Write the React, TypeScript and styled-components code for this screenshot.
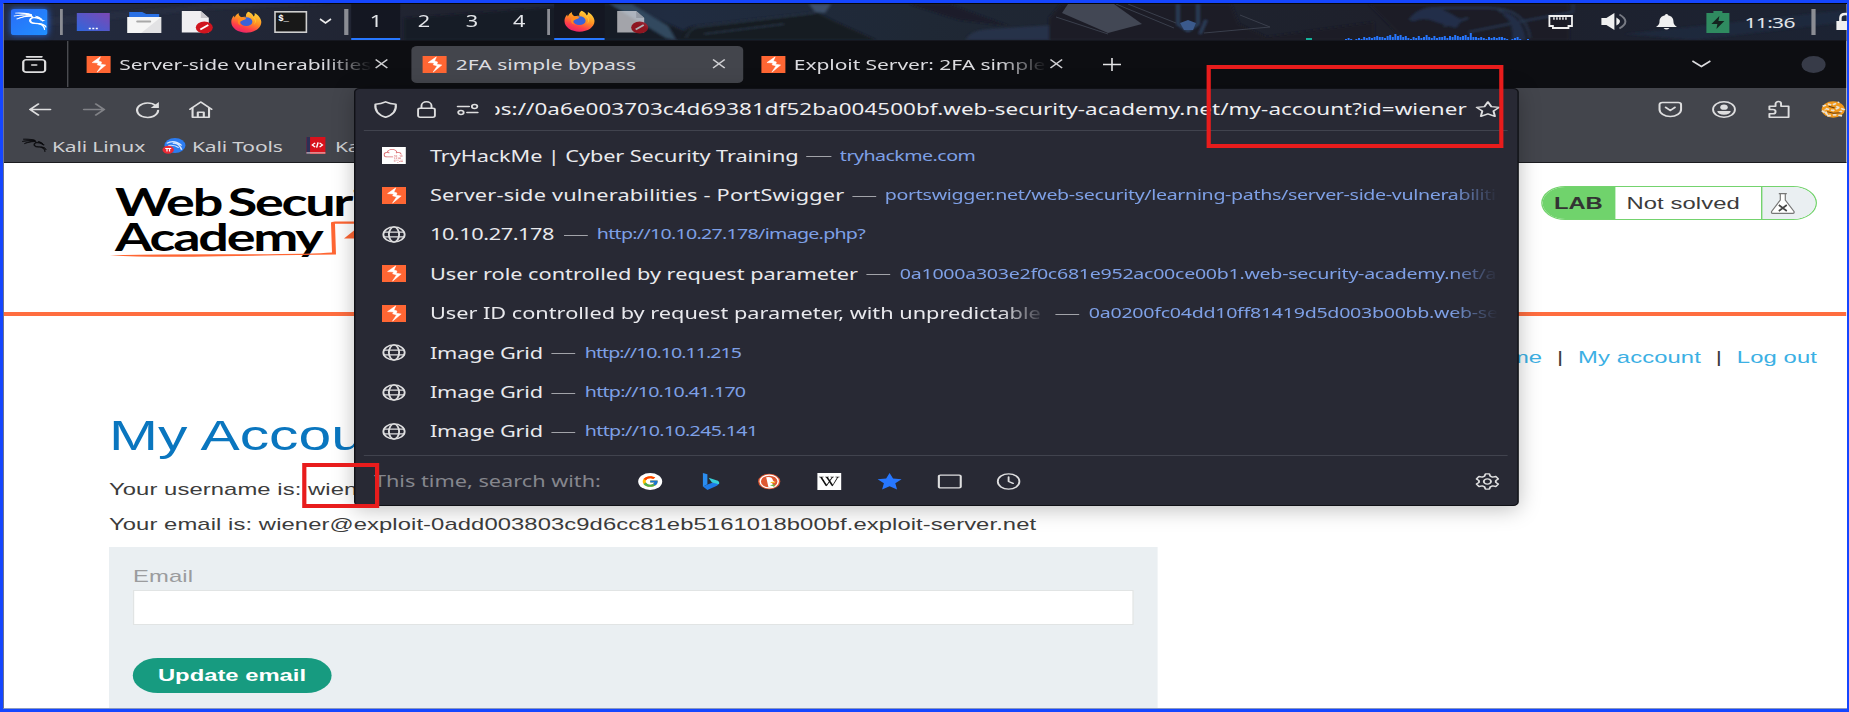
import React from "react";
import styled, { createGlobalStyle, css } from "styled-components";
import { SiKalilinux, SiTryhackme, SiWikipedia } from "react-icons/si";
import { FcGoogle } from "react-icons/fc";

/* The desktop is displayed on a wide, non-square-pixel screen. */
const STRETCH = 1.4;
const sx = (n: number) => `${n / STRETCH}px`;

const UI = `"Noto Sans", "Open Sans", sans-serif`;
const WEB = `"Liberation Sans", Arial, sans-serif`;

const GlobalStyle = createGlobalStyle`
  * { box-sizing: border-box; }
  body { margin: 0; background: #1546ff; overflow: hidden; }
`;

const Frame = styled.div`
  width: 1849px;
  height: 712px;
  padding: 3px 2px 3px 3px;
  background: #1546ff;
`;

const Screen = styled.div`
  height: 706px;
  overflow: hidden;
  background: #fff;
  border-top: 1px solid #05060c;
  border-left: 1px solid #6c7390;
  border-bottom: 1px solid #8b9ac0;
`;

const Stage = styled.div`
  position: relative;
  display: flex;
  flex-direction: column;
  width: ${sx(1843)};
  height: 704px;
  transform: scaleX(${STRETCH});
  transform-origin: 0 0;
  font-family: ${UI};
`;

const Item = styled.div<{ $gap?: number; $w?: number }>`
  display: flex;
  flex: none;
  align-items: center;
  margin-left: ${(p) => sx(p.$gap ?? 0)};
  ${(p) => p.$w !== undefined && css`width: ${sx(p.$w)};`}
  white-space: nowrap;
`;

const Glyph = styled.svg.attrs({ preserveAspectRatio: "none" })<{ $w?: number; $h?: number }>`
  display: block;
  flex: none;
  width: ${(p) => sx(p.$w ?? 24)};
  height: ${(p) => p.$h ?? 17}px;
  overflow: visible;
`;

/* ---------- taskbar ---------- */

const Taskbar = styled.div`
  position: relative;
  display: flex;
  align-items: center;
  height: 37px;
  padding-bottom: 1px;
  background: #1e212d;
  border-bottom: 1px solid #15171f;
  flex: none;
`;

const Wallpaper = styled.svg`
  position: absolute;
  inset: 0;
  width: 100%;
  height: 36px;
`;

const Divider = styled.div<{ $gap: number }>`
  position: relative;
  flex: none;
  width: ${sx(3.5)};
  height: 26px;
  margin-left: ${(p) => sx(p.$gap)};
  background: #8b8d94;
`;

const Launcher = styled(Item)`
  position: relative;
  justify-content: center;
  height: 36px;
`;

const KaliTile = styled.div`
  display: flex;
  align-items: center;
  justify-content: center;
  width: ${sx(36)};
  height: 26px;
  border-radius: 2px;
  background: linear-gradient(135deg, #2a6cf8, #1f90ff);
  box-shadow: 0 0 5px #2468e8;
  color: #fff;
`;

const Dragon = styled(SiKalilinux)`
  flex: none;
  stroke: currentColor;
  stroke-width: 0.8px;
  overflow: visible;
`;

const Workspace = styled.div<{ $active?: boolean; $w: number; $gap?: number }>`
  position: relative;
  display: flex;
  flex: none;
  align-items: center;
  justify-content: center;
  width: ${(p) => sx(p.$w)};
  height: 37px;
  margin-left: ${(p) => sx(p.$gap ?? 0)};
  border-bottom: 2px solid ${(p) => (p.$active ? "#2777ff" : "transparent")};
  background: ${(p) => (p.$active ? "#141722" : "transparent")};
  color: #e4e6ea;
  font-size: 15.5px;
`;

const Clock = styled(Item)`
  position: relative;
  color: #e2e5ea;
  font-size: 15px;
  letter-spacing: -0.5px;
`;

/* ---------- tab strip ---------- */

const TabStrip = styled.div`
  display: flex;
  align-items: center;
  height: 47px;
  padding-bottom: 1px;
  background: #0d0e12;
  flex: none;
`;

const TabRule = styled.div`
  width: 1px;
  height: 46px;
  margin-left: ${sx(21)};
  background: #4a4b50;
`;

const Tab = styled.div<{ $active?: boolean; $gap: number; $w: number }>`
  display: flex;
  flex: none;
  align-items: center;
  width: ${(p) => sx(p.$w)};
  height: 37px;
  margin-left: ${(p) => sx(p.$gap)};
  padding: 0 ${sx(18)} 0 ${sx(12)};
  border-radius: 4px;
  background: ${(p) => (p.$active ? "#43454c" : "transparent")};
`;

const fade = css`
  mask-image: linear-gradient(to right, #000 calc(100% - 34px), transparent);
`;

const TabTitle = styled.span<{ $fade?: boolean }>`
  flex: 1;
  overflow: hidden;
  margin: 0 ${sx(3)} 0 ${sx(9)};
  color: #dcdce0;
  font-size: 15px;
  line-height: 22px;
  white-space: nowrap;
  letter-spacing: ${(p) => (p.$fade ? -0.05 : 0)}px;
  ${(p) => p.$fade && fade}
`;

/* ---------- toolbars ---------- */

const NavBar = styled.div`
  display: flex;
  align-items: center;
  height: 44px;
  padding-bottom: 2px;
  background: #43454c;
  flex: none;
`;

const Bookmarks = styled.div`
  display: flex;
  align-items: center;
  height: 31px;
  padding-bottom: 3px;
  background: #43454c;
  border-bottom: 1px solid #1b1c20;
  flex: none;
`;

const BookmarkLabel = styled(Item)`
  color: #cfd0d3;
  font-size: 15px;
  line-height: 22px;
  letter-spacing: -0.1px;
`;

const Spacer = styled.div`
  flex: 1;
`;

/* ---------- web page ---------- */

const Page = styled.div`
  flex: 1;
  overflow: hidden;
  background: #fff;
  color: #3c3c3c;
  font-family: ${WEB};
`;

const PageHeader = styled.header`
  display: flex;
  justify-content: space-between;
  height: 153px;
  padding: 23px ${sx(30)} 0 ${sx(105)};
  border-bottom: 4px solid #ff6d3f;
`;

const Brand = styled.div`
  position: relative;
  width: ${sx(320)};
  margin-top: -2px;
  padding-left: ${sx(6)};
  color: #000;
  font-family: Lato, sans-serif;
  font-size: 38.5px;
  font-weight: 700;
  line-height: 34.5px;
  letter-spacing: -1.6px;
  word-spacing: -3px;
  white-space: nowrap;
`;

const BrandLine = styled.svg`
  position: absolute;
  left: 0;
  top: 30px;
  width: ${sx(300)};
  height: 48px;
`;

const LabStatus = styled.div`
  display: flex;
  width: ${sx(276)};
  height: 34px;
  border: 1px solid #74d36e;
  border-radius: ${sx(24)} / 17px;
  overflow: hidden;
`;

const LabTag = styled.div`
  width: ${sx(73)};
  padding-left: ${sx(11.5)};
  background: #70d36c;
  color: #333;
  font-size: 17px;
  font-weight: bold;
  line-height: 34px;
`;

const LabText = styled.div`
  flex: 1;
  padding-left: ${sx(11)};
  font-size: 17px;
  line-height: 33px;
  letter-spacing: 0.07px;
`;

const LabFlask = styled.div`
  display: flex;
  align-items: center;
  width: ${sx(55)};
  padding-left: ${sx(9)};
  border-left: 1px solid #74d36e;
  background: #eaeff2;
`;

const AccountLinks = styled.nav`
  display: flex;
  justify-content: flex-end;
  gap: ${sx(14.8)};
  padding: 32px ${sx(30)} 0 0;
  font-size: 17px;
  line-height: 20px;
  letter-spacing: 0.08px;
`;

const Link = styled.a`
  color: #3cb0e4;
`;

const Title = styled.h1`
  margin: 44px 0 0 ${sx(105)};
  color: #0a76bf;
  font-size: 42px;
  font-weight: 400;
  line-height: 48px;
`;

const Line = styled.p<{ $top: number }>`
  margin: ${(p) => p.$top}px 0 0 ${sx(105)};
  font-size: 17px;
  line-height: 20px;
  letter-spacing: 0.06px;
  white-space: nowrap;
`;

const Form = styled.form`
  width: ${sx(1049)};
  height: 170px;
  margin: 12px 0 0 ${sx(105)};
  padding: 20px ${sx(24)};
  background: #eaeff2;
`;

const Label = styled.label`
  display: block;
  color: #9b9c9e;
  font-size: 17px;
  line-height: 20px;
  letter-spacing: 0.1px;
`;

const Input = styled.input`
  display: block;
  width: 100%;
  height: 35px;
  margin-top: 3px;
  border: 1px solid #e1e4e4;
  background: #fff;
  outline: none;
`;

const Submit = styled.button`
  display: block;
  width: ${sx(198)};
  height: 35px;
  margin-top: 33px;
  padding: 0;
  border: 0;
  border-radius: ${sx(25)} / 17.5px;
  background: #179b80;
  color: #fff;
  font: bold 17px/35px ${WEB};
`;

/* ---------- address bar dropdown ---------- */

const Popup = styled.div`
  position: absolute;
  left: ${sx(349.5)};
  top: 84px;
  display: flex;
  flex-direction: column;
  width: ${sx(1165)};
  height: 418px;
  padding: 0 ${sx(9)};
  border: 1px solid #101116;
  border-radius: 4px;
  background: #282934;
  box-shadow: 0 3px 18px rgba(0, 0, 0, 0.26);
`;

const UrlRow = styled.div`
  display: flex;
  align-items: center;
  height: 42px;
  padding-bottom: 1px;
  border-bottom: 1px solid #41434e;
  flex: none;
`;

const UrlBox = styled(Item)`
  justify-content: flex-end;
  overflow: hidden;
  color: #eeeef1;
  font-size: 16px;
  line-height: 24px;
  letter-spacing: 0.05px;
`;

const Results = styled.div`
  display: flex;
  flex-direction: column;
  padding-top: 5px;
  height: 324px;
  flex: none;
`;

const Result = styled.div`
  display: flex;
  align-items: center;
  height: 39.4px;
  padding: 0 ${sx(10)} 0 ${sx(17.5)};
  white-space: nowrap;
`;

const ResultTitle = styled.span<{ $w: number; $track?: number; $fade?: boolean }>`
  flex: none;
  overflow: ${(p) => (p.$fade ? "hidden" : "visible")};
  width: ${(p) => sx(p.$w)};
  margin-left: ${sx(24.5)};
  color: #e9e9ed;
  font-size: 15.5px;
  line-height: 24px;
  letter-spacing: ${(p) => p.$track ?? 0}px;
  ${(p) => p.$fade && fade}
`;

const Dash = styled.span`
  flex: none;
  width: ${sx(24)};
  height: 1px;
  margin: 2px ${sx(9)} 0;
  background: #a2a3a9;
`;

const ResultUrl = styled.span<{ $track: number; $fade?: boolean }>`
  flex: 1;
  min-width: 0;
  overflow: hidden;
  color: #7ea0e6;
  font-size: 14px;
  line-height: 22px;
  letter-spacing: ${(p) => p.$track}px;
  ${(p) => p.$fade && fade}
`;

const Engines = styled.div`
  display: flex;
  flex: 1;
  align-items: center;
  padding-top: 1px;
  border-top: 1px solid #41434e;
`;

const EnginesLabel = styled(Item)`
  color: #85868d;
  font-size: 15.5px;
`;

const Wiki = styled.div`
  display: flex;
  align-items: center;
  justify-content: center;
  width: ${sx(24)};
  height: 17px;
  background: #fff;
  color: #111;
`;

const Highlight = styled.div<{ $x: number; $y: number; $w: number; $h: number }>`
  position: absolute;
  left: ${(p) => sx(p.$x)};
  top: ${(p) => p.$y}px;
  width: ${(p) => sx(p.$w)};
  height: ${(p) => p.$h}px;
  border: solid #e81c1c;
  border-width: 4.5px ${sx(4.5)};
`;

/* ---------- drawings ---------- */

const stroke = { fill: "none", stroke: "#dededf", strokeWidth: 1.25, strokeLinecap: "round", strokeLinejoin: "round" } as const;

const Bolt = () => (
  <Glyph viewBox="0 0 16 16">
    <rect width="16" height="16" fill="#ff6633" />
    <path d="M9.200.8 3.700 6.200 7.700 6.500 7.100 8.300 9.700 9.300 7 15.200 12.800 8.500 9.500 7.700 10 5.700 8 4.600z" fill="#fff" stroke="#fff" strokeWidth=".4" />
  </Glyph>
);

const Globe = () => (
  <Glyph viewBox="0 0 16 16">
    <g {...stroke}>
      <circle cx="8" cy="8" r="7.1" />
      <ellipse cx="8" cy="8" rx="3.4" ry="7.1" />
      <path d="M1.4 5.7h13.2M1.4 10.3h13.2" />
    </g>
  </Glyph>
);

const Close = () => (
  <Glyph $w={13} $h={9.5} viewBox="0 0 10 10">
    <path d="M.5.5 9.5 9.5M9.5.5.5 9.5" stroke="#cfcfd2" strokeWidth="1.2" />
  </Glyph>
);

const Firefox = ({ id }: { id: string }) => (
  <Glyph $w={31} $h={22} viewBox="0 0 32 32">
    <defs>
      <linearGradient id={id} x1=".8" y1="0" x2=".3" y2="1">
        <stop offset="0" stopColor="#ffdc3e" />
        <stop offset=".45" stopColor="#ff9022" />
        <stop offset=".75" stopColor="#ff4048" />
        <stop offset="1" stopColor="#e8206e" />
      </linearGradient>
    </defs>
    <path d="M18 1c4 2 5 5 5.500 7 1-1 1.500-3 1-5 4 3 7 8 7 13 0 9-7 15.500-15.500 15.500S.5 25 .5 16c0-4 1-7 3-9.500 0 1.500 0 2 .5 3C5 6 7 4 8 3c0 3 1 5 3 6 2-.5 4-.5 5-.5C15 6 16 3 18 1z" fill={`url(#${id})`} />
    <circle cx="16" cy="15.500" r="6.300" fill="#3a62d8" />
    <path d="M9 10c2-1.500 5-1 7 1-1 2-3 2-5 3.500C8 16 9 20 12 21 7 21 6 14 9 10z" fill="#ff8a1e" />
    <path d="M23 8c3 3 4 8 1 12 2-5 1-9-3-12z" fill="#ffc832" />
  </Glyph>
);

const Doc = ({ dim }: { dim?: boolean }) => (
  <Glyph $w={31} $h={24} viewBox="0 0 31 24" opacity={dim ? 0.65 : 1}>
    <path d="M0 1h19l8 7v14.500H0z" fill="#f0eff2" />
    <path d="M19 1l8 7h-8z" fill="#c8c6cb" />
    <ellipse cx="22.500" cy="17.500" rx="8.500" ry="6" fill="#d0151f" />
    <path d="M18.500 19.500l8-4.500" stroke="#fff" strokeWidth="2" />
  </Glyph>
);

const spectrum = [1, 2, 1, 0, 1, 2, 1, 3, 2, 3, 2, 3, 4, 3, 3, 2, 4, 5, 3, 6, 4, 5, 3, 4, 2, 1, 3, 2, 4, 2, 3, 5, 3, 2, 4, 2, 3, 3, 4, 2, 4, 3, 5, 4, 3, 4, 5, 3, 7, 3, 3, 2, 3, 2, 1, 3, 2, 3, 2, 3, 3, 2, 1, 0, 1, 2, 3, 1, 0, 0, 1];

const Backdrop = () => (
  <Wallpaper viewBox="0 0 1843 36" preserveAspectRatio="none">
    <defs>
      <linearGradient id="sky" x1="0" x2="1">
        <stop offset="0" stopColor="#232b40" />
        <stop offset=".25" stopColor="#20232f" />
        <stop offset=".36" stopColor="#202c41" />
        <stop offset=".5" stopColor="#1f2835" />
        <stop offset=".75" stopColor="#1e202b" />
        <stop offset="1" stopColor="#1c2333" />
      </linearGradient>
      <filter id="soft" x="-5%" y="-50%" width="110%" height="200%"><feGaussianBlur stdDeviation="1.6 0.8" /></filter>
    </defs>
    <rect width="1843" height="36" fill="url(#sky)" />
    <g filter="url(#soft)">
      <path d="M40 22 200 6 330 0H210L40 14z" fill="#2b3448" opacity=".5" />
      <path d="M490 36 580 0h40l80 36zM400 14l170-12-60 34H400z" fill="#191c28" />
      <path d="M606 0l56 34 10 2-8-14L628 0z" fill="#33485e" />
      <path d="M676 36q2-12 14-14L812 8l20 10 40 18z" fill="#191b24" />
      <path d="M682 34q4-10 12-11l118-14M700 30l80-10" fill="none" stroke="#2f3e52" />
      <path d="M805 0h22l-6 9-10-1z" fill="#3d5068" />
      <path d="M905 0h40l60 22-50-6z" fill="#1a1e2a" />
      <path d="M962 36q4-10 24-11l64-4v15z" fill="#27324a" />
      <path d="M1045 36V14l12-14h170l8 20 34 16z" fill="#1b1c25" />
      <path d="M1174 0v20l10 7 10-7V0M1202 16l-6 14" fill="none" stroke="#33496b" strokeWidth="2" />
      <path d="M1240 36l130-18v18zM1365 0h200v36H1400z" fill="#1b1d26" />
      <path d="M1406 16q8-12 28-12h50q38 0 42 30M1494 6q20 6 16 30M1465 28l60-12 44-8V0M1440 22l24-8" fill="none" stroke="#26354c" strokeWidth="2" />
      <path d="M1408 12q14-12 28-8l22 12-6 8-20-6q-12-6-24 0z" fill="#232f4a" />
      <path d="M1500 8q18 4 22 28h-14q2-18-8-24z" fill="#222d46" />
      <path d="M1620 30 1843 6v12L1690 36z" fill="#202b45" opacity=".6" />
    </g>
    <path d="M1058 9l6-9h46l28 20-34 9z" fill="#424754" />
    <path d="M1052 13l52 17M1112 0l58 24M1124 0l48 19M1200 29l66-6-30-12" fill="none" stroke="#3a3f4c" />
    <path d="M1176 19l8-3 8 3-3 7h-9z" fill="#3b5a8c" />
    <rect x="1302" y="34" width="6" height="2" fill="#14b39b" />
    {spectrum.map((h, i) => (
      <rect key={i} x={1341 + i * 2.6} y={36 - h} width="2" height={h} fill="#2777ff" />
    ))}
  </Wallpaper>
);

const results = [
  { icon: "thm", title: "TryHackMe | Cyber Security Training", w: 368, tt: -0.06, url: "tryhackme.com", track: -0.38 },
  { icon: "ps", title: "Server-side vulnerabilities - PortSwigger", w: 413, tt: 0.15, url: "portswigger.net/web-security/learning-paths/server-side-vulnerabilities", track: -0.24, fade: true },
  { icon: "web", title: "10.10.27.178", w: 125, tt: -0.3, url: "http://10.10.27.178/image.php?", track: -0.51 },
  { icon: "ps", title: "User role controlled by request parameter", w: 428, url: "0a1000a303e2f0c681e952ac00ce00b1.web-security-academy.net/admin", track: -0.2, fade: true },
  { icon: "ps", title: "User ID controlled by request parameter, with unpredictable user IDs", w: 617, url: "0a0200fc04dd10ff81419d5d003b00bb.web-security-academy.net", track: -0.2, fade: true, cut: true },
  { icon: "web", title: "Image Grid", w: 113, tt: -0.12, url: "http://10.10.11.215", track: -0.7 },
  { icon: "web", title: "Image Grid", w: 113, tt: -0.12, url: "http://10.10.41.170", track: -0.54 },
  { icon: "web", title: "Image Grid", w: 113, tt: -0.12, url: "http://10.10.245.141", track: -0.48 },
];

const ResultIcon = ({ kind }: { kind: string }) =>
  kind === "ps" ? <Bolt /> : kind === "web" ? <Globe /> : (
    <Wiki><SiTryhackme color="#d9696c" size={14} /></Wiki>
  );

export default function App() {
  return (
    <>
      <GlobalStyle />
      <Frame>
        <Screen>
          <Stage>
            <Taskbar>
              <Backdrop />
              <Launcher $gap={7.5} $w={36}><KaliTile><Dragon size={23} /></KaliTile></Launcher>
              <Divider $gap={12.5} />
              <Launcher $gap={13} $w={33}>
                <Glyph $w={33} $h={18} viewBox="0 0 33 18">
                  <defs><linearGradient id="desk" x1="0" y1="1" x2="1" y2="0"><stop offset="0" stopColor="#2f66dc" /><stop offset="1" stopColor="#7c48b4" /></linearGradient></defs>
                  <rect width="33" height="18" fill="url(#desk)" />
                  <path d="M12 15.500h9" stroke="#fff" strokeWidth="1.300" strokeDasharray="2 1.500" />
                </Glyph>
              </Launcher>
              <Launcher $gap={17.5} $w={34}>
                <Glyph $w={34} $h={22} viewBox="0 0 34 22">
                  <path d="M2 7V1h13l4 2h13v6H2z" fill="#2a70e4" />
                  <path d="M0 6h34v16H0z" fill="#f5f5f5" />
                  <path d="M34 6v16H14z" fill="#e2e2e4" />
                  <path d="M10 10.500h13" stroke="#a8a8a8" strokeWidth="2" strokeLinecap="round" />
                </Glyph>
              </Launcher>
              <Launcher $gap={21} $w={31}><Doc /></Launcher>
              <Launcher $gap={17.5} $w={31}><Firefox id="fxa" /></Launcher>
              <Launcher $gap={13} $w={33}>
                <Glyph $w={33} $h={22} viewBox="0 0 33 22">
                  <rect x=".8" y=".8" width="31.400" height="20.400" fill="#181818" stroke="#cfcfcf" strokeWidth="1.600" />
                  <text x="4" y="10" fill="#fff" fontSize="9" fontWeight="700" fontFamily="Liberation Mono, monospace">$_</text>
                </Glyph>
              </Launcher>
              <Launcher $gap={11} $w={14}>
                <Glyph $w={13} $h={5} viewBox="0 0 13 5"><path d="M1 0 6.500 4 12 0" fill="none" stroke="#eee" strokeWidth="1.600" /></Glyph>
              </Launcher>
              <Divider $gap={12} />
              <Workspace $gap={4} $w={48} $active>1</Workspace>
              <Workspace $w={48}>2</Workspace>
              <Workspace $w={48}>3</Workspace>
              <Workspace $w={47}>4</Workspace>
              <Divider $gap={4} />
              <Workspace $gap={4} $w={51} $active><Firefox id="fxb" /></Workspace>
              <Launcher $gap={12.5} $w={31}><Doc dim /></Launcher>
              <Spacer />
              <Launcher $w={25}>
                <Glyph $w={25} $h={14} viewBox="0 0 25 14">
                  <path d="M1.200 1h22.600v10h-3.500v2H4.700v-2H1.200z" fill="none" stroke="#f0f0f0" strokeWidth="1.800" />
                  <path d="M5 3.500h15" stroke="#f0f0f0" strokeWidth="2.400" strokeDasharray="1.500 1.500" />
                </Glyph>
              </Launcher>
              <Launcher $gap={28} $w={26}>
                <Glyph $w={26} $h={17} viewBox="0 0 26 17">
                  <path d="M0 5h5l8-5v17L5 12H0z" fill="#f0f0f0" />
                  <path d="M15 4.500q7 4 0 8z" fill="#f0f0f0" />
                  <path d="M18 1.500q12 7 0 14" fill="none" stroke="#777a83" strokeWidth="2" />
                </Glyph>
              </Launcher>
              <Launcher $gap={29} $w={21}>
                <Glyph $w={21} $h={16} viewBox="0 0 21 16">
                  <path d="M10.500 0q1.500 0 1.500 1.200c4 .8 5.500 3.300 5.500 6.800 0 2 1 3 3.500 5H0c2.500-2 3.500-3 3.500-5C3.500 4.500 5 2 9 1.200 9 0 10.500 0 10.500 0zM7.500 14h6q-3 3-6 0z" fill="#f0f0f0" />
                </Glyph>
              </Launcher>
              <Launcher $gap={29} $w={23}>
                <Glyph $w={23} $h={22} viewBox="0 0 23 22">
                  <path d="M0 2h7V0h9v2h7v20H0z" fill="#2f8b60" />
                  <path d="M13 5 5 13h6l-1 5 8-8h-6z" fill="#14241f" />
                </Glyph>
              </Launcher>
              <Clock $gap={15} $w={49}>11:36</Clock>
              <Divider $gap={18.5} />
              <Launcher $gap={20.5} $w={11}>
                <Glyph $w={18} $h={17} viewBox="0 0 18 17">
                  <path d="M4 8h18v9H4z" fill="#f0f0f0" />
                  <path d="M8 8V5q0-4 5-4t5 4v3" fill="none" stroke="#f0f0f0" strokeWidth="2.500" />
                </Glyph>
              </Launcher>
            </Taskbar>

            <TabStrip>
              <Item $gap={17.5}>
                <Glyph viewBox="0 0 16 16">
                  <g {...stroke} strokeWidth="1.500">
                    <path d="M3 .8h10" />
                    <rect x=".7" y="3.600" width="14.600" height="11.600" rx="2" />
                    <path d="M6.500 8.500h3" />
                  </g>
                </Glyph>
              </Item>
              <TabRule />
              <Tab $gap={6.500} $w={332}><Bolt /><TabTitle $fade>Server-side vulnerabilities</TabTitle><Close /></Tab>
              <Tab $gap={4.500} $w={332.5} $active><Bolt /><TabTitle>2FA simple bypass</TabTitle><Close /></Tab>
              <Tab $gap={5.500} $w={332}><Bolt /><TabTitle $fade>Exploit Server: 2FA simple bypass</TabTitle><Close /></Tab>
              <Item $gap={22}>
                <Glyph $w={18} $h={13} viewBox="0 0 18 13"><path d="M0 6.500h18M9 0v13" stroke="#e4e4e6" strokeWidth="1.600" /></Glyph>
              </Item>
              <Spacer />
              <Item>
                <Glyph $w={18} $h={8} viewBox="0 0 18 8"><path d="M0 1l9 5.500L18 1" fill="none" stroke="#dcdcdf" strokeWidth="1.600" /></Glyph>
              </Item>
              <Item $gap={91} $w={45}>
                <Glyph $w={24} viewBox="0 0 16 16"><circle cx="8" cy="8" r="8" fill="#373b48" /></Glyph>
              </Item>
            </TabStrip>

            <NavBar>
              <Item $gap={24}><Glyph viewBox="0 0 16 16"><path {...stroke} strokeWidth="1.500" d="M15 8H1.500M7 2.800 1.500 8 7 13.200" /></Glyph></Item>
              <Item $gap={30}><Glyph viewBox="0 0 16 16" opacity=".4"><path {...stroke} strokeWidth="1.500" d="M1 8h13.500M9 2.800 14.500 8 9 13.200" /></Glyph></Item>
              <Item $gap={30}><Glyph viewBox="0 0 16 16"><path {...stroke} strokeWidth="1.500" d="M13.500 4.500A7 6.800 0 1 0 15 9" /><path d="M15.500 1v5.500H10z" fill="#dededf" /></Glyph></Item>
              <Item $gap={29}><Glyph viewBox="0 0 16 16"><g {...stroke} strokeWidth="1.400"><path d="M.8 7.800 8 .9l7.200 6.900" /><path d="M2.500 6.500v8.700h11V6.500" /><path d="M6 15v-4.500h4V15" /></g></Glyph></Item>
              <Spacer />
              <Item><Glyph $w={23} viewBox="0 0 16 16"><g {...stroke} strokeWidth="1.400"><path d="M2.500 1.500h11q2 0 2 2V8a7.500 6.500 0 0 1-15 0V3.500q0-2 2-2z" /><path d="M4.800 6 8 9l3.200-3" /></g></Glyph></Item>
              <Item $gap={31}><Glyph viewBox="0 0 16 16"><circle {...stroke} cx="8" cy="8" r="7.300" /><circle cx="8" cy="5.800" r="2.500" fill="#dededf" /><path d="M3.500 9.500h9q-.5 3.500-4.500 3.500T3.500 9.500z" fill="#dededf" /></Glyph></Item>
              <Item $gap={31}><Glyph $w={22} viewBox="0 0 16 16"><path {...stroke} strokeWidth="1.400" d="M1 5h4.500V2.500a2 2 0 0 1 4 0V5H15v10.300H1V12h2.500a2 2 0 0 0 0-4H1z" /></Glyph></Item>
              <Item $gap={31} $w={26.5}>
                <Glyph viewBox="0 0 16 16">
                  <circle cx="8" cy="8" r="7.700" fill="#f0981c" />
                  <path d="M1 5l4-2 2 1 5-3M.5 9l3 3-1-4M4 14l5-1 5 1M10 5l5 3-3 3M3 7l5 2 4-3" fill="none" stroke="#e8e2d6" strokeWidth="1.500" strokeDasharray="2.500 1.300" />
                  <path d="M4 10l4 1.500L13 11M5 5l4 1.500" stroke="#6b3d0d" strokeWidth="1" fill="none" />
                </Glyph>
              </Item>
            </NavBar>
            <Bookmarks>
              <Item $gap={18} $w={25}><Dragon size={17} color="#0b0b0d" /></Item>
              <BookmarkLabel $gap={5} $w={94}>Kali Linux</BookmarkLabel>
              <Item $gap={16}>
                <Glyph viewBox="0 0 16 16">
                  <circle cx="8.500" cy="8" r="7" fill="#2c7cf0" />
                  <path d="M3 6q5-4 10 2M7 6q4-1 6 6M4 8q4-1 7 2" stroke="#d8e8ff" strokeWidth="1" fill="none" />
                  <circle cx="4" cy="12" r="3.800" fill="#ec2a34" />
                  <path d="M2 10.800h4M3.200 11v2.600M4.900 11v2.600" stroke="#fff" strokeWidth=".8" />
                </Glyph>
              </Item>
              <BookmarkLabel $gap={6} $w={95}>Kali Tools</BookmarkLabel>
              <Item $gap={20}>
                <Glyph $w={19} viewBox="0 0 13 16">
                  <rect width="13" height="16" fill="#d8121c" />
                  <rect width="2.500" height="16" fill="#2c2f55" />
                  <path d="M0 15h13" stroke="#e8d8d8" />
                  <path d="M6 5.500 4 7.500l2 2M9 5.500l2 2-2 2M8 5l-1 5" stroke="#fff" fill="none" />
                </Glyph>
              </Item>
              <BookmarkLabel $gap={9}>Kali Docs</BookmarkLabel>
            </Bookmarks>

            <Page>
              <PageHeader>
                <Brand>
                  Web Security<br />Academy
                  <BrandLine viewBox="0 0 300 48" preserveAspectRatio="none">
                    <path d="M1 41.500Q20 40.300 110 40.300T223 38.500L222 9q0-1.500 4-1.500h74v2.300h-74L227 40.600Q180 41 110 42.300T1 41.500z" fill="#ff6633" />
                    <path d="M235 24.500l10-8v8z" fill="#ff6633" />
                  </BrandLine>
                </Brand>
                <LabStatus>
                  <LabTag>LAB</LabTag>
                  <LabText>Not solved</LabText>
                  <LabFlask>
                    <Glyph $w={24} $h={21} viewBox="0 0 24 21">
                      <path d="M8 .7h8M9.500 1v6L.8 18.500q-.5 1.800 1 1.800h20.400q1.500 0 1-1.800L14.500 7V1" fill="#fff" stroke="#777" strokeWidth="1.200" />
                      <path d="M8 12l8 6M16 12l-8 6" stroke="#444" strokeWidth="1.600" />
                    </Glyph>
                  </LabFlask>
                </LabStatus>
              </PageHeader>
              <AccountLinks>
                <Link>Home</Link><span>|</span><Link>My account</Link><span>|</span><Link>Log out</Link>
              </AccountLinks>
              <Title>My Account</Title>
              <Line $top={20}>Your username is: wiener</Line>
              <Line $top={15}>Your email is: wiener@exploit-0add003803c9d6cc81eb5161018b00bf.exploit-server.net</Line>
              <Form>
                <Label>Email</Label>
                <Input />
                <Submit type="button">Update email</Submit>
              </Form>
            </Page>

            <Popup>
              <UrlRow>
                <Item $gap={9.5}><Glyph viewBox="0 0 16 16"><path {...stroke} strokeWidth="1.400" d="M8 .8q3 2 6.800 2.200Q15.500 12 8 15.300.5 12 1.200 3 5 2.800 8 .8z" /></Glyph></Item>
                <Item $gap={19.5}><Glyph $w={19} viewBox="0 0 14 16"><g {...stroke} strokeWidth="1.400"><rect x=".8" y="6.800" width="12.400" height="8.400" rx="1.500" /><path d="M3.300 6.800V4.500a3.700 3.700 0 0 1 7.400 0v2.300" /></g></Glyph></Item>
                <Item $gap={20.5}><Glyph $w={23} viewBox="0 0 16 16"><g {...stroke} strokeWidth="1.300"><path d="M1 5.200h8M7.500 10.800H15" /><circle cx="12.800" cy="5.200" r="1.900" /><circle cx="3.300" cy="10.800" r="1.900" /></g></Glyph></Item>
                <UrlBox $gap={16.5} $w={971}>https://0a6e003703c4d69381df52ba004500bf.web-security-academy.net/my-account?id=wiener</UrlBox>
                <Item $gap={8}><Glyph $w={25} viewBox="0 0 16 16"><path {...stroke} strokeWidth="1.300" d="M8 .8l2.200 4.500 5 .7-3.600 3.500.9 4.900L8 12.100l-4.500 2.300.9-4.900L.8 6l5-.7z" /></Glyph></Item>
              </UrlRow>
              <Results>
                {results.map((r, i) => (
                  <Result key={i}>
                    <ResultIcon kind={r.icon} />
                    <ResultTitle $w={r.w} $track={r.tt} $fade={r.cut}>{r.title}</ResultTitle>
                    <Dash />
                    <ResultUrl $track={r.track} $fade={r.fade}>{r.url}</ResultUrl>
                  </Result>
                ))}
              </Results>
              <Engines>
                <EnginesLabel $gap={10} $w={228}>This time, search with:</EnginesLabel>
                <Item $gap={36}>
                  <Glyph viewBox="0 0 16 16"><circle cx="8" cy="8" r="8" fill="#fff" /><FcGoogle x={2} y={2} width={12} height={12} size={12} /></Glyph>
                </Item>
                <Item $gap={36}>
                  <Glyph viewBox="0 0 16 16">
                    <path d="M3 0l3 1.200v9.300L3 13z" fill="#2b8df0" />
                    <path d="M3 12.800l3-2 7-3.500q1.500 3-1 5L6 16z" fill="#1e7be8" />
                    <path d="M6.800 4.500 13 7.300q1.300 1 .8 3.200L9 9z" fill="#38d0d8" />
                  </Glyph>
                </Item>
                <Item $gap={35}>
                  <Glyph viewBox="0 0 16 16">
                    <circle cx="8" cy="8" r="7.400" fill="#de5833" /><circle cx="8" cy="8" r="6" fill="none" stroke="#fff" />
                    <path d="M6 4q4-1 4.500 3l1.500 2-2 .5 1 4H7.500z" fill="#fff" /><path d="M9 8.500l3.500-.5-1 1.500H9z" fill="#fdb924" /><path d="M8.500 11.500l3-1v2.500z" fill="#65bc46" />
                  </Glyph>
                </Item>
                <Item $gap={36.5}><Wiki><SiWikipedia size={15} /></Wiki></Item>
                <Item $gap={36.5}><Glyph viewBox="0 0 16 16"><path fill="#2777ff" d="M8 0l2.300 5.200 5.700.6-4.200 3.800 1.200 5.900L8 12.500l-5 3 1.200-5.900L0 5.800l5.700-.6z" /></Glyph></Item>
                <Item $gap={36}><Glyph viewBox="0 0 16 16"><rect {...stroke} strokeWidth="1.400" x=".7" y="2" width="14.600" height="12" rx="1" /></Glyph></Item>
                <Item $gap={35.5}><Glyph viewBox="0 0 16 16"><g {...stroke}><circle cx="8" cy="8" r="7.200" /><path d="M8 3.800V8l3 1.800" /></g></Glyph></Item>
                <Spacer />
                <Item>
                  <Glyph viewBox="0 0 16 16"><g {...stroke}><path d="M6.700.8h2.600l.6 2.200 1.500.9 2.300-.6 1.500 2.300-1.600 1.600v1.600l1.600 1.600-1.500 2.300-2.300-.6-1.500.9-.6 2.200H6.700L6.100 13l-1.500-.9-2.300.6L.8 10.400l1.600-1.600V7.200L.8 5.600l1.500-2.300 2.300.6L6.100 3z" /><circle cx="8" cy="8" r="2.400" /></g></Glyph>
                </Item>
                <Item $w={9} />
              </Engines>
            </Popup>

            <Highlight $x={1202} $y={61} $w={298} $h={83} />
            <Highlight $x={297.5} $y={459} $w={77.5} $h={45} />
          </Stage>
        </Screen>
      </Frame>
    </>
  );
}
